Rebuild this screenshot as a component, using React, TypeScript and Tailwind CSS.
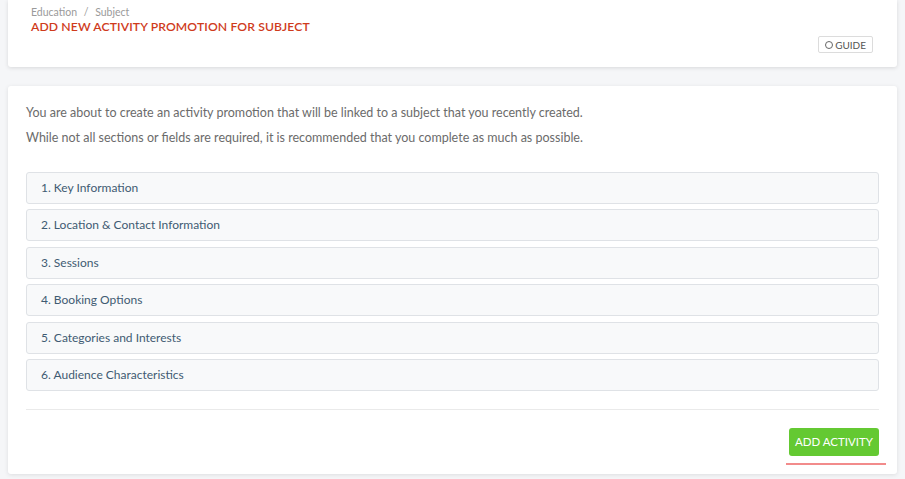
import React from "react";

const sections = [
  "1. Key Information",
  "2. Location & Contact Information",
  "3. Sessions",
  "4. Booking Options",
  "5. Categories and Interests",
  "6. Audience Characteristics",
];

export default function App() {
  return (
    <div
      className="min-h-[479px] w-full bg-[#f5f6f8] px-2 pb-[6px]"
      style={{ fontFamily: "Lato, 'Open Sans', sans-serif" }}
    >
      <div className="relative h-[67px] rounded-b-[3px] bg-white pl-[23px] pr-[24px] shadow-[0_1px_4px_rgba(0,0,0,0.12)]">
        <div className="pt-[5px] text-[10.5px] leading-[14px] text-[#9a9a9a]">
          Education <span className="mx-[4px]">/</span> Subject
        </div>
        <div className="mt-[0px] text-[12.2px] leading-[16px] font-semibold tracking-[0.1px] text-[#cf3b1c]">
          ADD NEW ACTIVITY PROMOTION FOR SUBJECT
        </div>
        <div className="mt-[1px] flex justify-end">
          <button className="flex h-[17px] items-center gap-[2px] rounded-[2px] border border-[#dcdcdc] bg-white px-[6px] text-[10px] leading-none text-[#555]">
            <span className="inline-block h-[8px] w-[8px] rounded-full border-[1.5px] border-[#666]"></span>
            GUIDE
          </button>
        </div>
      </div>

      <div className="mt-[19px] rounded-[3px] bg-white px-[18px] pt-[19px] pb-[9px] shadow-[0_1px_4px_rgba(0,0,0,0.1)]">
        <p className="text-[12.5px] leading-[16px] text-[#6b6b6b]">
          You are about to create an activity promotion that will be linked to a subject that you recently created.
        </p>
        <p className="mt-[9px] text-[12.5px] leading-[16px] text-[#6b6b6b]">
          While not all sections or fields are required, it is recommended that you complete as much as possible.
        </p>

        <div className="mt-[26px] flex flex-col gap-[5.4px]">
          {sections.map((s) => (
            <div
              key={s}
              className="flex h-[32px] items-center rounded-[3px] border border-[#dfe2e6] bg-[#f8f9fa] pl-[14px] text-[12px] text-[#3f5b72]"
            >
              {s}
            </div>
          ))}
        </div>

        <div className="mt-[18px] h-px bg-[#eaeaea]"></div>

        <div className="mt-[18px] flex flex-col items-end">
          <button className="h-[28px] w-[90px] rounded-[3px] bg-[#64c932] text-[11.5px] text-white">
            ADD ACTIVITY
          </button>
          <div className="mt-[7px] mr-[-7px] h-[2px] w-[100px] bg-[#f28b8b]"></div>
        </div>
      </div>
    </div>
  );
}
